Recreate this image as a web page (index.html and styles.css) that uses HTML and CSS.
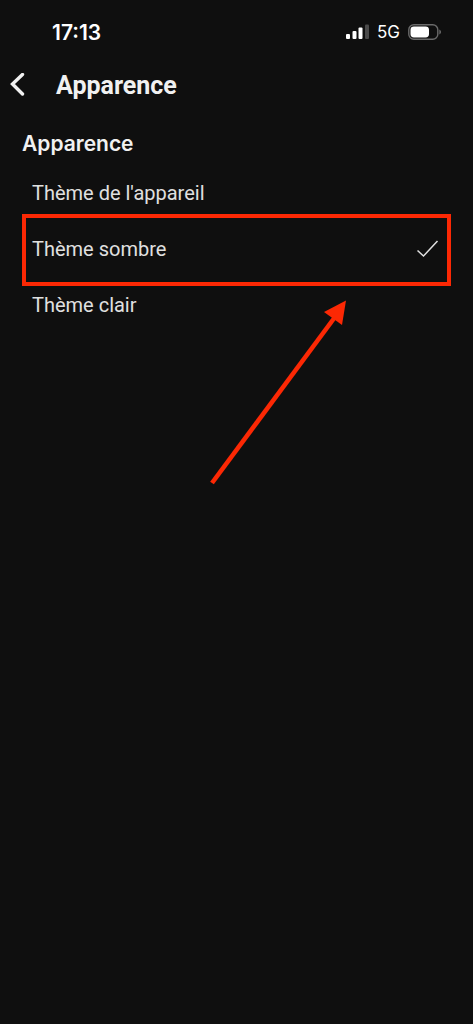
FILE: index.html
```
<!DOCTYPE html>
<html lang="fr">
<head>
    <meta charset="UTF-8">
    <meta name="viewport" content="width=device-width, initial-scale=1.0">
    <title>Apparence</title>
    <link rel="stylesheet" href="styles.css">
</head>
<body>
    <div class="status-bar">
        <span class="time">17:13</span>
        <div class="status-icons">
            <svg class="signal" width="24" height="16" viewBox="0 0 24 16" aria-hidden="true">
                <rect x="1" y="10" width="4" height="5" rx="1" fill="#fff"/>
                <rect x="7.5" y="7" width="4" height="8" rx="1" fill="#fff"/>
                <rect x="13.5" y="3.500" width="4" height="11.500" rx="1" fill="#fff"/>
                <rect x="20" y="0.5" width="4" height="14.5" rx="1" fill="#4a4a4a"/>
            </svg>
            <span class="network">5G</span>
            <svg class="battery" width="34" height="16" viewBox="0 0 34 16" aria-hidden="true">
                <rect x="0.8" y="0.8" width="29" height="14.4" rx="5" fill="none" stroke="#6a6a6a" stroke-width="1.4"/>
                <rect x="2.5" y="2.5" width="18.5" height="11" rx="3.4" fill="#fff"/>
                <path d="M31.3 5.5v5c1-.4 1.7-1.4 1.7-2.5s-.7-2.1-1.7-2.5z" fill="#6a6a6a"/>
            </svg>
        </div>
    </div>

    <header class="header">
        <button class="back-btn" type="button" aria-label="Retour">
            <svg width="16" height="24" viewBox="0 0 16 24" aria-hidden="true">
                <path d="M12.500 1.500L2.500 11l10 10" fill="none" stroke="#f1f1f1" stroke-width="3.4" stroke-linecap="round"/>
            </svg>
        </button>
        <h1 class="title">Apparence</h1>
    </header>

    <main class="settings">
        <h2 class="section-title" id="themeTitle">Apparence</h2>
        <div class="options" role="radiogroup" aria-labelledby="themeTitle">
            <label class="option">
                <span class="option-name">Thème de l'appareil</span>
                <input class="option-input" type="radio" name="theme" value="device">
            </label>
            <label class="option highlighted">
                <span class="option-name">Thème sombre</span>
                <input class="option-input" type="radio" name="theme" value="dark" checked>
                <svg class="check" width="22" height="18" viewBox="0 0 22 18" aria-hidden="true">
                    <path d="M0.500 10.500l6 5.500L20.500 1" fill="none" stroke="#e0e0e0" stroke-width="1.500"/>
                </svg>
            </label>
            <label class="option">
                <span class="option-name">Thème clair</span>
                <input class="option-input" type="radio" name="theme" value="light">
            </label>
            <svg class="arrow" width="138" height="186" viewBox="0 0 138 186" aria-hidden="true">
                <path d="M2 183L125 17" stroke="#fc2804" stroke-width="4.600"/>
                <path d="M136 0.500L114 12l18 13z" fill="#fc2804"/>
            </svg>
        </div>
    </main>
</body>
</html>
```
FILE: styles.css
```
* {
    box-sizing: border-box;
}
body {
    margin: 0;
    min-height: 100vh;
    background-color: #0f0f0f;
    color: #f1f1f1;
    font-family: Inter, 'Liberation Sans', sans-serif;
}
.status-bar {
    display: flex;
    justify-content: space-between;
    align-items: center;
    height: 64px;
    padding: 0 31px 0 52px;
}
.time {
    font-size: 21px;
    font-weight: 600;
    color: #fff;
}
.status-icons {
    display: flex;
    align-items: center;
    gap: 8px;
}
.network {
    font-size: 17px;
    font-weight: 400;
    color: #fff;
}
.header {
    display: flex;
    align-items: center;
    gap: 30px;
    height: 42px;
    padding-left: 10px;
}
.back-btn {
    display: flex;
    padding: 0;
    border: none;
    background: none;
    cursor: pointer;
}
.title {
    margin: 0;
    font-family: Roboto, sans-serif;
    font-size: 25px;
    font-weight: 700;
}
.section-title {
    margin: 0;
    padding: 24px 22px 7px;
    font-size: 21px;
    line-height: 28px;
    font-weight: 600;
}
.options {
    position: relative;
}
.option {
    position: relative;
    display: flex;
    justify-content: space-between;
    align-items: center;
    height: 56px;
    padding: 0 34px 0 32px;
    color: #e0e0e0;
    cursor: pointer;
}
.option-name {
    font-family: Roboto, sans-serif;
    font-size: 20px;
}
.option-input {
    position: absolute;
    opacity: 0;
}
.highlighted::after {
    content: "";
    position: absolute;
    top: -7px;
    right: 22px;
    bottom: -9px;
    left: 22px;
    border: 4px solid #fc2804;
}
.arrow {
    position: absolute;
    top: 135px;
    left: 210px;
}
```
